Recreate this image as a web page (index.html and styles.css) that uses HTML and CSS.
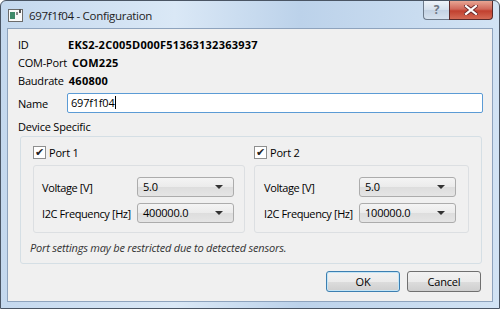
FILE: index.html
```html
<!DOCTYPE html>
<html lang="en">
<head>
<meta charset="UTF-8" />
<title>697f1f04 - Configuration</title>
<link rel="stylesheet" href="styles.css">
</head>
<body>
	<div class="window">
		<div class="titlebar">
			<svg class="app-icon" width="16" height="16" viewBox="0 0 16 16">
				<rect x="0.5" y="1.5" width="14" height="12" fill="#fafafa" stroke="#6b6b6b" />
				<rect x="2" y="4" width="5" height="7" fill="#3f8a6a" />
				<rect x="8" y="4" width="2" height="3" fill="#8a8a8a" />
				<rect x="11" y="1" width="2" height="4" fill="#555" />
			</svg>
			<span class="title">697f1f04 - Configuration</span>
			<div class="caption-buttons">
				<div class="btn-help">?</div>
				<div class="btn-close">
					<svg width="14" height="10" viewBox="0 0 14 10">
						<path d="M2 1 L12 9 M12 1 L2 9" stroke="#6b2a2a" stroke-width="4" stroke-linecap="square" />
						<path d="M2 1 L12 9 M12 1 L2 9" stroke="#fff" stroke-width="2.2" stroke-linecap="square" />
					</svg>
				</div>
			</div>
		</div>
		<div class="client">
			<div class="info">
				<div class="info-row"><span class="label">ID</span><b>EKS2-2C005D000F51363132363937</b></div>
				<div class="info-row"><span class="label">COM-Port</span><b>COM225</b></div>
				<div class="info-row"><span class="label">Baudrate</span><b>460800</b></div>
			</div>
			<div class="name-row">
				<span class="label">Name</span>
				<div class="name-input">697f1f04<span class="caret"></span></div>
			</div>
			<div class="section-title">Device Specific</div>
			<div class="group">
				<div class="ports">
					<div class="port">
						<div class="check-row"><span class="checkbox">&#10004;</span>Port 1</div>
						<div class="port-box">
							<span>Voltage [V]</span>
							<div class="combo">5.0<span class="arrow"></span></div>
							<span>I2C Frequency [Hz]</span>
							<div class="combo">400000.0<span class="arrow"></span></div>
						</div>
					</div>
					<div class="port">
						<div class="check-row"><span class="checkbox">&#10004;</span>Port 2</div>
						<div class="port-box second">
							<span>Voltage [V]</span>
							<div class="combo">5.0<span class="arrow"></span></div>
							<span>I2C Frequency [Hz]</span>
							<div class="combo">100000.0<span class="arrow"></span></div>
						</div>
					</div>
				</div>
				<div class="note">Port settings may be restricted due to detected sensors.</div>
			</div>
			<div class="buttons">
				<div class="button default">OK</div>
				<div class="button">Cancel</div>
			</div>
		</div>
	</div>
</body>
</html>
```

FILE: styles.css
```css
html, body {
	margin: 0;
	padding: 0;
}
body {
	width: 500px;
	height: 309px;
	background-color: #fff;
	font-family: "Open Sans", "Noto Sans", sans-serif;
	font-size: 11px;
	letter-spacing: -0.2px;
	color: #000;
	overflow: hidden;
}
.window {
	box-sizing: border-box;
	width: 500px;
	height: 309px;
	display: flex;
	flex-direction: column;
	padding: 0 6px 6px 6px;
	border: 1px solid #4a5564;
	border-radius: 6px 6px 0 0;
	background: linear-gradient(to right, #c4d8ee 0%, #dae8f6 35%, #bcd2ea 60%, #d2e3f4 100%);
}
.titlebar {
	display: flex;
	align-items: center;
	height: 27px;
	flex-shrink: 0;
}
.app-icon {
	margin: 2px 5px 0 1px;
}
.title {
	font-size: 11.5px;
	letter-spacing: -0.3px;
	color: #1e1e1e;
	margin-top: 1px;
}
.caption-buttons {
	display: flex;
	margin-left: auto;
	align-self: flex-start;
}
.btn-help {
	width: 25px;
	height: 18px;
	border: 1px solid #6d7a8a;
	border-top: none;
	border-right: none;
	border-radius: 0 0 0 4px;
	background: linear-gradient(#eef3f9, #d4dfec 50%, #c3d2e3 51%, #d6e2ef);
	color: #6e7783;
	font-size: 12px;
	font-weight: bold;
	text-align: center;
	line-height: 17px;
}
.btn-close {
	width: 42px;
	height: 18px;
	border: 1px solid #5b2a2a;
	border-top: none;
	border-radius: 0 0 4px 0;
	background: linear-gradient(#e8a593, #d0685a 45%, #c1402f 55%, #d46a55);
	display: flex;
	align-items: center;
	justify-content: center;
}
.client {
	flex: 1;
	display: flex;
	flex-direction: column;
	background-color: #f0f0f0;
	border: 1px solid #8ea3bd;
	padding: 7px 10px 0 10px;
}
.info-row {
	display: flex;
	gap: 5px;
	height: 18px;
	line-height: 18px;
	white-space: nowrap;
}
.label {
	min-width: 45px;
}
.info-row b {
	font-weight: bold;
	letter-spacing: 0.25px;
}
.name-row {
	display: flex;
	align-items: center;
	gap: 4px;
	margin-top: 3px;
}
.name-input {
	flex: 1;
	box-sizing: border-box;
	height: 20px;
	line-height: 18px;
	margin-right: -1px;
	padding-left: 3px;
	background-color: #fff;
	border: 1px solid #5b9bd5;
	border-radius: 2px;
}
.caret {
	display: inline-block;
	width: 1px;
	height: 13px;
	background-color: #000;
	vertical-align: -2px;
}
.section-title {
	height: 18px;
	line-height: 18px;
	margin-top: 5px;
}
.group {
	margin: 0 0 0 2px;
	padding: 6px 12px 0 12px;
	height: 120px;
	border: 1px solid #d5dfe5;
	border-radius: 3px;
}
.ports {
	display: grid;
	grid-template-columns: 212px 215px;
	gap: 9px;
}
.check-row {
	display: flex;
	align-items: center;
	gap: 3px;
	height: 18px;
	margin-bottom: 4px;
}
.checkbox {
	box-sizing: border-box;
	width: 13px;
	height: 13px;
	border: 1px solid #8e8f8f;
	background-color: #fff;
	font-family: "DejaVu Sans", sans-serif;
	font-size: 11px;
	font-weight: bold;
	line-height: 11px;
	text-align: center;
	color: #222;
}
.port-box {
	display: grid;
	grid-template-columns: minmax(0, 1fr) 97px;
	column-gap: 7px;
	row-gap: 6px;
	align-items: center;
	padding: 11px 10px 9px 8px;
	border: 1px solid #dcdfe2;
	border-radius: 3px;
	white-space: nowrap;
}
.port-box span {
	letter-spacing: -0.4px;
}
.port-box.second {
	padding: 11px 12px 9px 9px;
}
.combo {
	position: relative;
	box-sizing: border-box;
	height: 20px;
	line-height: 18px;
	padding-left: 5px;
	border: 1px solid #acacac;
	border-radius: 3px;
	background: linear-gradient(#f4f4f4, #ebebeb 50%, #dddddd 51%, #e5e5e5);
}
.arrow {
	position: absolute;
	right: 10px;
	top: 7px;
	width: 0;
	height: 0;
	border-left: 4px solid transparent;
	border-right: 4px solid transparent;
	border-top: 4px solid #333;
}
.note {
	font-style: italic;
	color: #333;
	margin-top: 6px;
	margin-left: -3px;
	height: 18px;
	line-height: 18px;
}
.buttons {
	display: flex;
	justify-content: flex-end;
	gap: 7px;
	margin-top: 7px;
	padding-right: 1px;
}
.button {
	box-sizing: border-box;
	width: 74px;
	height: 21px;
	line-height: 19px;
	text-align: center;
	border: 1px solid #707070;
	border-radius: 3px;
	background: linear-gradient(#f2f2f2, #ebebeb 50%, #dddddd 51%, #cfcfcf);
}
.button.default {
	border-color: #3c7fb1;
	box-shadow: inset 0 0 0 1px #c4e5f6;
}
```
